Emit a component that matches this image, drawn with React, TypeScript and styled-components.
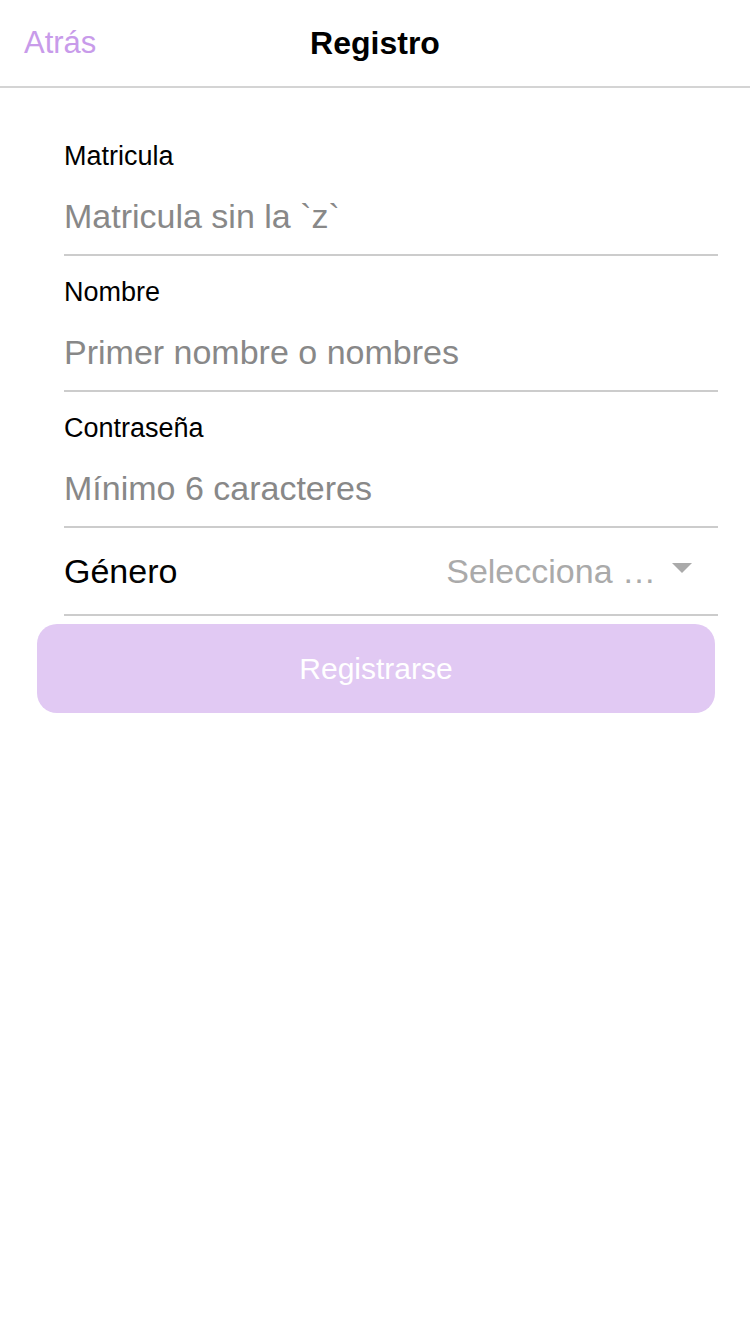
import styled, { createGlobalStyle } from 'styled-components';

const GlobalStyle = createGlobalStyle`
  html, body {
    margin: 0;
    padding: 0;
    background: #ffffff;
    font-family: "Liberation Sans", Arial, sans-serif;
  }
  * {
    box-sizing: border-box;
  }
`;

const Page = styled.div`
  width: 750px;
  min-height: 1334px;
  background: #ffffff;
`;

const Header = styled.header`
  position: relative;
  display: flex;
  align-items: center;
  justify-content: center;
  height: 88px;
  border-bottom: 2px solid #d4d4d4;
`;

const BackButton = styled.button`
  position: absolute;
  left: 24px;
  top: 0;
  height: 86px;
  padding: 0;
  border: none;
  background: none;
  font-family: inherit;
  font-size: 31px;
  color: #c89bea;
  cursor: pointer;
`;

const Title = styled.h1`
  margin: 0;
  font-size: 32px;
  font-weight: 700;
  color: #000000;
`;

const Form = styled.form`
  display: flex;
  flex-direction: column;
  padding: 32px 32px 0 64px;
`;

const Field = styled.label`
  display: flex;
  flex-direction: column;
  padding-top: 20px;
  border-bottom: 2px solid #cccccc;
`;

const FieldLabel = styled.span`
  font-size: 27px;
  line-height: 32px;
  color: #000000;
`;

const TextInput = styled.input`
  margin-top: 7px;
  height: 75px;
  padding: 0;
  border: none;
  outline: none;
  background: transparent;
  font-family: inherit;
  font-size: 34px;
  color: #000000;

  &::placeholder {
    color: #888888;
  }
`;

const SelectRow = styled.div`
  display: flex;
  align-items: center;
  justify-content: space-between;
  height: 88px;
  padding-right: 26px;
  border-bottom: 2px solid #cccccc;
`;

const SelectLabel = styled.span`
  font-size: 34px;
  color: #000000;
`;

const SelectValue = styled.div`
  display: flex;
  align-items: center;
  gap: 16px;
  font-size: 34px;
  color: #aaaaaa;
  cursor: pointer;
`;

const Caret = styled.span`
  width: 0;
  height: 0;
  margin-top: -6px;
  border-left: 10px solid transparent;
  border-right: 10px solid transparent;
  border-top: 10px solid #aaaaaa;
`;

const ButtonWrap = styled.div`
  padding: 8px 35px 0 37px;
`;

const SubmitButton = styled.button`
  width: 100%;
  height: 89px;
  border: none;
  border-radius: 20px;
  background: #e1c9f3;
  font-family: inherit;
  font-size: 30px;
  color: #ffffff;
  cursor: pointer;
`;

const fields = [
  { label: 'Matricula', placeholder: 'Matricula sin la `z`', type: 'text' },
  { label: 'Nombre', placeholder: 'Primer nombre o nombres', type: 'text' },
  { label: 'Contraseña', placeholder: 'Mínimo 6 caracteres', type: 'password' },
];

export default function App() {
  return (
    <Page>
      <GlobalStyle />
      <Header>
        <BackButton type="button">Atrás</BackButton>
        <Title>Registro</Title>
      </Header>
      <Form onSubmit={(e) => e.preventDefault()}>
        {fields.map((f) => (
          <Field key={f.label}>
            <FieldLabel>{f.label}</FieldLabel>
            <TextInput type={f.type} placeholder={f.placeholder} />
          </Field>
        ))}
        <SelectRow>
          <SelectLabel>Género</SelectLabel>
          <SelectValue role="button">
            Selecciona …
            <Caret />
          </SelectValue>
        </SelectRow>
      </Form>
      <ButtonWrap>
        <SubmitButton type="button">Registrarse</SubmitButton>
      </ButtonWrap>
    </Page>
  );
}
